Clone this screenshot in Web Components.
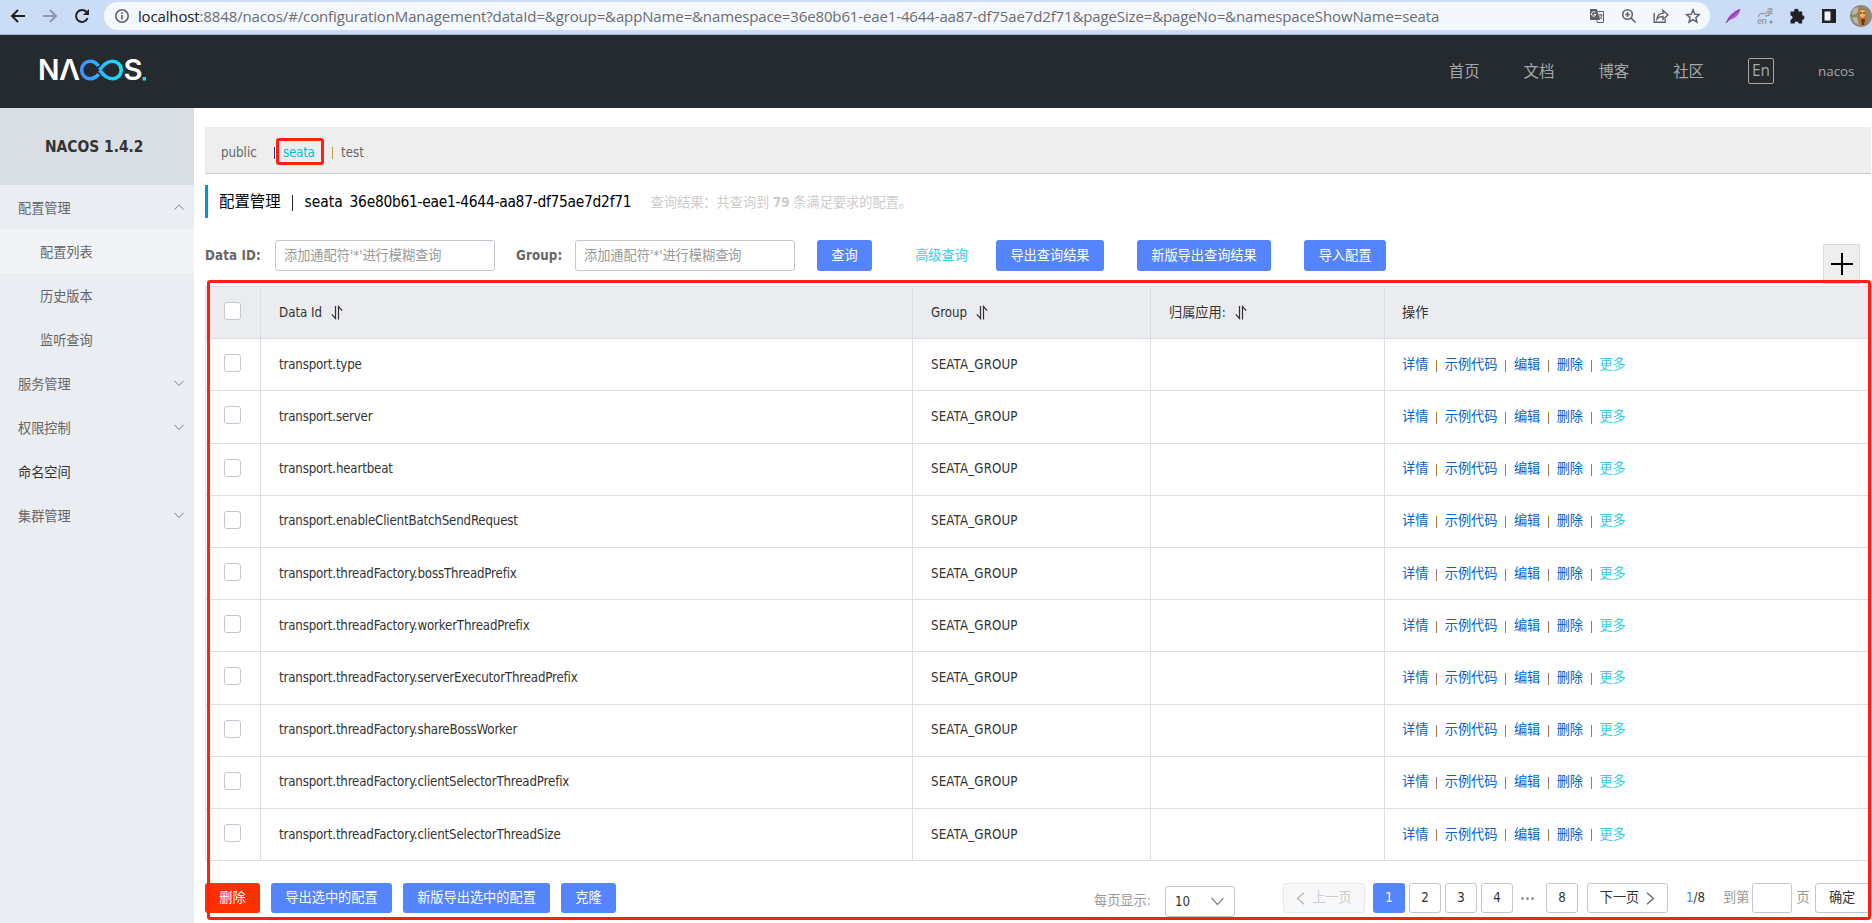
<!DOCTYPE html>
<html lang="zh-CN">
<head>
<meta charset="UTF-8">
<title>Nacos</title>
<style>
    html, body {
        margin: 0;
        height: 100%;
        overflow: hidden;
        background: #fff;
    }

    body {
        font: 13.2px/1.5 "DejaVu Sans Condensed", "Noto Sans CJK SC", sans-serif;
        color: #333;
    }
</style>
</head>
<body>
<nacos-app></nacos-app>

<script>
class BrowserBar extends HTMLElement {
    connectedCallback() {
        this.attachShadow({ mode: 'open' }).innerHTML = `
            <style>
                :host {
                    display: flex;
                    height: 35px;
                    box-sizing: border-box;
                    background: #cbdcf7;
                    border-bottom: 1px solid #a5b4d4;
                }

                svg { display: block; flex: none; }

                .nav {
                    display: flex;
                    gap: 16px;
                    width: 94px;
                    padding: 8px 0 0 10px;
                }

                .pill {
                    display: flex;
                    align-items: center;
                    width: 1608px;
                    height: 28px;
                    margin-top: 2px;
                    padding: 0 9px 0 10px;
                    box-sizing: border-box;
                    border-radius: 14px;
                    background: #f4f8fd;
                }

                .url {
                    flex: 1;
                    margin-left: 8px;
                    font: 15px/28px "Open Sans", sans-serif;
                    letter-spacing: -0.13px;
                    color: #6a6d72;
                    white-space: nowrap;
                }

                .url b { font-weight: 400; color: #202124; }

                .inner, .ext { display: flex; gap: 16px; }

                .ext { padding: 8px 0 0 15px; }

                .avatar { margin: -3px 0 0 -3px; }
            </style>
            <div class="nav">
                <svg width="16" height="16" fill="none" stroke="#202124" stroke-width="2"><path d="M15 8H2M8 2 2 8l6 6"/></svg>
                <svg width="16" height="16" fill="none" stroke="#8a97ad" stroke-width="2"><path d="M1 8h13M8 2l6 6-6 6"/></svg>
                <svg width="16" height="16" fill="none" stroke="#202124" stroke-width="2"><path d="M13.6 10.2A6 6 0 1 1 12.6 4"/><path d="M15 1v6H9z" fill="#202124" stroke="none"/></svg>
            </div>
            <div class="pill">
                <svg width="16" height="16" fill="none" stroke="#5f6368" stroke-width="1.6"><circle cx="8" cy="8" r="6.2"/><path d="M8 7v4.5M8 4.3V6"/></svg>
                <span class="url"><b>localhost</b>:8848/nacos/#/configurationManagement?dataId=&amp;group=&amp;appName=&amp;namespace=36e80b61-eae1-4644-aa87-df75ae7d2f71&amp;pageSize=&amp;pageNo=&amp;namespaceShowName=seata</span>
                <div class="inner">
                    <svg width="16" height="16"><path d="M1 1h7l3 11H2q-1 0-1-1z" fill="#5f6368"/><path d="M9 3.5h5.5v11H8.5L7.6 12" fill="none" stroke="#5f6368"/><path d="M6.3 4.500A2.200 2.200 0 1 0 6.800 6.500H4.700" fill="none" stroke="#f4f8fd"/><path d="M9.500 7h4M11.500 6v1M13 7q-.6 3-3 4M10.500 8.500q1 2 2.600 2.700" fill="none" stroke="#5f6368"/></svg>
                    <svg width="16" height="16" fill="none" stroke="#5f6368" stroke-width="1.6"><circle cx="6.500" cy="6.500" r="4.800"/><path d="m10 10 4.500 4.500M6.500 4.300v4.400M4.300 6.500h4.400"/></svg>
                    <svg width="16" height="16" fill="none" stroke="#5f6368" stroke-width="1.4"><path d="M1.200 5v9.300h11V11M4 11q.500-5.600 6-5.600V2.400L15 7l-5 4.300V8.500Q6 8.300 4 11z"/></svg>
                    <svg width="16" height="16" fill="none" stroke="#5f6368" stroke-width="1.500"><path d="m8 1.900 1.800 4.300 4.500.4-3.400 3 1 4.500L8 11.700l-3.900 2.400 1-4.500-3.400-3 4.500-.4z"/></svg>
                </div>
            </div>
            <div class="ext">
                <svg width="16" height="16"><path d="M1 15Q3 5 15.500.5 15 9 3.500 12.500z" fill="#b455d6"/><path d="M1 15Q6 8 14 2" fill="none" stroke="#6d2c91"/></svg>
                <svg width="16" height="20" fill="none" stroke="#9a9da3" stroke-width="1.300"><path d="M1.500 9q1-4 4.500-3.500T11 3M8 8l5-1M10.500 1h5M13 0v2M15 2q-1 3-4 4M11.500 3q1.500 2 4 3"/><circle cx="14" cy="14" r="1.500" fill="#8a8d93" stroke="none"/><text x="0" y="16" font-family="Roboto" font-size="9" fill="#85888e" stroke="none">en</text></svg>
                <svg width="16" height="16"><path d="M1.500 3.500h3.700a2.200 2.200 0 1 1 4.300 0H13.200v3.700a2.300 2.300 0 1 1 0 4.600V15.500H9.700a2 2 0 0 0-4.200 0h-4v-3.800a2 2 0 0 0 0-4.200z" fill="#202124"/></svg>
                <svg width="16" height="16"><path d="M1 1h14v14H1z" fill="#202124"/><path d="M3.500 3.500h6v9h-6z" fill="#edf3fc"/></svg>
                <svg class="avatar" width="22" height="22"><circle cx="11" cy="11" r="11" fill="#8d8a78"/><path d="M3 4l4-2 2 3-3 4-4 1zM2 13l5-1 2 8-4-2z" fill="#b9b5a5"/><path d="M8 5q4-4 8 0l2 6-2 9-6 1-2-8z" fill="#b7773a"/><path d="M10 6q3-2 5 0v5l-3 2-2-2z" fill="#e4b878"/><circle cx="11" cy="8" r=".8"/><circle cx="14" cy="8" r=".8"/><path d="M11 14h4l-1 6h-2z" fill="#6e321d"/></svg>
            </div>
        `;
    }
}

class NacosHeader extends HTMLElement {
    connectedCallback() {
        this.attachShadow({ mode: 'open' }).innerHTML = `
            <style>
                :host {
                    display: flex;
                    justify-content: space-between;
                    align-items: center;
                    height: 73px;
                    padding: 0 18px 0 30px;
                    box-sizing: border-box;
                    background: #252a2f;
                    color: #a5a8aa;
                }

                nav {
                    display: flex;
                    align-items: center;
                    gap: 44px;
                    font-size: 15.4px;
                }

                nav span { padding-top: 2px; }

                nav .lang {
                    width: 24px;
                    height: 24px;
                    margin-top: -1px;
                    padding: 0;
                    border: 1px solid #a5a8aa;
                    border-radius: 2px;
                    font: 15.4px/23px "Open Sans", sans-serif;
                    text-align: center;
                }

                nav .user {
                    width: 36px;
                    padding: 0;
                    font: 13.4px "Open Sans", sans-serif;
                    white-space: nowrap;
                }
            </style>
            <svg width="128" height="48" viewBox="30 47.500 128 48">
                <defs>
                    <linearGradient id="loop" x1="80" x2="123" y1="0" y2="0" gradientUnits="userSpaceOnUse">
                        <stop offset="0" stop-color="#448cff"/>
                        <stop offset="1" stop-color="#12e6f5"/>
                    </linearGradient>
                </defs>
                <g font-family="Inter" font-weight="600" font-size="28.500" fill="#fff">
                    <text x="38" y="79.800" textLength="21.500" lengthAdjust="spacingAndGlyphs">N</text>
                    <text x="59" y="79.800" textLength="21" lengthAdjust="spacingAndGlyphs">Λ</text>
                    <text x="123.500" y="79.800" textLength="19" lengthAdjust="spacingAndGlyphs">S</text>
                </g>
                <path d="M98.500 65.500C95.500 61.500 92 60.800 90.300 60.800a8.700 8.700 0 0 0 0 17.400c3.500 0 6-1.800 8.300-4.400M99.500 69.500C104 64 107 60.800 112.500 60.800a8.700 8.700 0 0 1 0 17.400C107 78.200 104 75 99.500 69.500" fill="none" stroke="url(#loop)" stroke-width="3.600"/>
                <path d="M142.500 76.500h3.500v3.500h-3.500z" fill="#12dff0"/>
            </svg>
            <nav>
                <span>首页</span>
                <span>文档</span>
                <span>博客</span>
                <span>社区</span>
                <span class="lang">En</span>
                <span class="user">nacos</span>
            </nav>
        `;
    }
}

class MenuItem extends HTMLElement {
    connectedCallback() {
        const arrow = this.getAttribute('arrow');
        const path = arrow === 'up' ? 'M.5 5.500 5 .8l4.500 4.700' : 'M.5.8 5 5.500 9.500.8';

        this.attachShadow({ mode: 'open' }).innerHTML = `
            <style>
                :host {
                    display: flex;
                    justify-content: space-between;
                    align-items: center;
                    height: 44px;
                    padding: 3px 10px 0 18px;
                    box-sizing: border-box;
                    color: #666;
                }

                svg { margin-top: -3px; }

                :host([sub]) { padding-left: 40px; }
                :host([active]) { background: #f2f3f7; }
                :host([leaf]) { color: #333; }
            </style>
            <slot></slot>
            ${arrow ? `<svg width="10" height="6" fill="none" stroke="#808489"><path d="${path}"/></svg>` : ''}
        `;
    }
}

class SideMenu extends HTMLElement {
    connectedCallback() {
        this.attachShadow({ mode: 'open' }).innerHTML = `
            <style>
                :host {
                    display: block;
                    flex: none;
                    width: 194px;
                    background: #eaedf2;
                }

                h1 {
                    margin: 0;
                    height: 77px;
                    padding-left: 45px;
                    background: #d9dde4;
                    font-size: 15.4px;
                    line-height: 79px;
                    white-space: nowrap;
                }
            </style>
            <h1>NACOS 1.4.2</h1>
            <menu-item arrow="up">配置管理</menu-item>
            <menu-item sub active>配置列表</menu-item>
            <menu-item sub>历史版本</menu-item>
            <menu-item sub>监听查询</menu-item>
            <menu-item arrow="down">服务管理</menu-item>
            <menu-item arrow="down">权限控制</menu-item>
            <menu-item leaf>命名空间</menu-item>
            <menu-item arrow="down">集群管理</menu-item>
        `;
    }
}

class NcButton extends HTMLElement {
    connectedCallback() {
        this.attachShadow({ mode: 'open' }).innerHTML = `
            <style>
                :host {
                    display: inline-flex;
                    flex: none;
                    justify-content: center;
                    align-items: center;
                    height: 31px;
                    box-sizing: border-box;
                    border-radius: 3px;
                    background: #5584ff;
                    color: #fff;
                    white-space: nowrap;
                }

                :host([type="warning"]) { background: #ff3000; }
                :host([type="text"]) { background: none; color: #33cde5; }
                :host([type="normal"]) {
                    background: #fff;
                    border: 1px solid #c4c6cf;
                    color: #333;
                }
                :host([type="disabled"]) {
                    background: #f7f8fa;
                    border: 1px solid #e6e7eb;
                    color: #ccc;
                }
            </style>
            <slot></slot>
        `;
    }
}

class NamespaceTabs extends HTMLElement {
    connectedCallback() {
        this.attachShadow({ mode: 'open' }).innerHTML = `
            <style>
                :host {
                    display: flex;
                    align-items: center;
                    height: 47px;
                    padding: 5px 0 0 16px;
                    box-sizing: border-box;
                    background: #eee;
                    border-bottom: 1px solid #c9cacc;
                    color: #666;
                }

                span { position: relative; }
                .public { width: 53px; }
                .current {
                    width: 49px;
                    padding-left: 8px;
                    box-sizing: content-box;
                    color: #00c1de;
                    letter-spacing: -0.2px;
                }
                .bar { width: 1px; height: 12px; background: #3b3f66; }
                .bar.warm { background: #c29a4e; }
                .last { padding-left: 8px; }

                .mark {
                    position: absolute;
                    left: 1px;
                    top: -5px;
                    width: 42px;
                    height: 21px;
                    border: 3px solid #ff1f14;
                    border-radius: 3px;
                }
            </style>
            <span class="public">public</span>
            <i class="bar"></i>
            <span class="current">seata<i class="mark"></i></span>
            <i class="bar warm"></i>
            <span class="last">test</span>
        `;
    }
}

class SearchForm extends HTMLElement {
    connectedCallback() {
        this.attachShadow({ mode: 'open' }).innerHTML = `
            <style>
                :host {
                    display: flex;
                    align-items: center;
                    height: 31px;
                    margin-top: 22px;
                }

                label {
                    width: 70px;
                    font-weight: 700;
                    color: #666;
                    letter-spacing: 0.15px;
                    white-space: nowrap;
                }
                label.group { width: 59px; margin-left: 21px; }

                input {
                    width: 220px;
                    height: 31px;
                    padding: 0 8px;
                    box-sizing: border-box;
                    border: 1px solid #c4c6cf;
                    border-radius: 3px;
                    font: inherit;
                }

                input::placeholder { color: #999; }

                .query { width: 55px; margin-left: 22px; }
                .more { width: 81px; margin: 0 14px 0 29px; }
                .export { width: 108px; }
                .export-new { width: 134px; margin-left: 33px; }
                .import { width: 82px; margin-left: 33px; }

                .add {
                    display: flex;
                    justify-content: center;
                    align-items: center;
                    align-self: flex-start;
                    width: 37px;
                    height: 40px;
                    margin: 4px 11px 0 auto;
                    box-sizing: border-box;
                    border: 1px solid #ddd;
                    background: #eee;
                }
            </style>
            <label>Data ID:</label>
            <input placeholder="添加通配符'*'进行模糊查询">
            <label class="group">Group:</label>
            <input placeholder="添加通配符'*'进行模糊查询">
            <nc-button class="query">查询</nc-button>
            <nc-button class="more" type="text">高级查询</nc-button>
            <nc-button class="export">导出查询结果</nc-button>
            <nc-button class="export-new">新版导出查询结果</nc-button>
            <nc-button class="import">导入配置</nc-button>
            <div class="add"><svg width="22" height="22" stroke="#000" stroke-width="2"><path d="M0 11h22M11 0v22"/></svg></div>
        `;
    }
}

class ConfigTable extends HTMLElement {
    connectedCallback() {
        const ids = [
            'transport.type',
            'transport.server',
            'transport.heartbeat',
            'transport.enableClientBatchSendRequest',
            'transport.threadFactory.bossThreadPrefix',
            'transport.threadFactory.workerThreadPrefix',
            'transport.threadFactory.serverExecutorThreadPrefix',
            'transport.threadFactory.shareBossWorker',
            'transport.threadFactory.clientSelectorThreadPrefix',
            'transport.threadFactory.clientSelectorThreadSize'
        ];
        const sort = '<svg width="12" height="15" fill="none" stroke="#333" stroke-width="1.200"><path d="M4.500 1v12.500L.8 9.300M7.500 14.500V1.500l3.700 4.200"/></svg>';
        const check = '<div class="check"><i></i></div>';

        this.attachShadow({ mode: 'open' }).innerHTML = `
            <style>
                :host {
                    display: block;
                    margin-top: 15px;
                    border: 1px solid #dcdee3;
                    border-width: 1px 0 0 1px;
                }

                .row {
                    display: grid;
                    grid-template-columns: 55px 652px 238px 234px 1fr;
                    height: 52.2px;
                }

                .row > div {
                    display: flex;
                    align-items: center;
                    padding-left: 18px;
                    border-right: 1px solid #dcdee3;
                    border-bottom: 1px solid #dcdee3;
                    white-space: nowrap;
                }

                .head > div { background: #ebecf0; }
                .head svg { margin-left: 9px; }

                .check i {
                    width: 15px;
                    height: 16px;
                    margin-top: -3px;
                    border: 1px solid #c4c6cf;
                    border-radius: 3px;
                    background: #fff;
                }

                .id { letter-spacing: -0.17px; }
                .group { letter-spacing: 0.15px; }

                .row > .ops { padding-left: 17px; }
                .ops a { color: #06c; }
                .ops a:last-child { color: #33cde5; }
                .ops i { width: 1px; height: 12px; margin: 2px 7.700px 0 7.700px; background: #997d60; }
            </style>
            <div class="row head">
                ${check}
                <div>Data Id ${sort}</div>
                <div>Group ${sort}</div>
                <div>归属应用: ${sort}</div>
                <div class="ops">操作</div>
            </div>
            ${ids.map((id) => `
                <div class="row">
                    ${check}
                    <div class="id">${id}</div>
                    <div class="group">SEATA_GROUP</div>
                    <div></div>
                    <div class="ops"><a>详情</a><i></i><a>示例代码</a><i></i><a>编辑</a><i></i><a>删除</a><i></i><a>更多</a></div>
                </div>
            `).join('')}
        `;
    }
}

class TableFooter extends HTMLElement {
    connectedCallback() {
        this.attachShadow({ mode: 'open' }).innerHTML = `
            <style>
                :host {
                    display: flex;
                    align-items: center;
                    height: 30px;
                    margin-top: 22px;
                    white-space: nowrap;
                }

                svg { flex: none; }
                nc-button { height: 30px; margin-right: 11px; }
                .size-label { width: 71px; margin: 6px 0 0 467px; color: #999; }

                .size {
                    display: flex;
                    flex: none;
                    justify-content: space-between;
                    align-items: center;
                    width: 70px;
                    height: 31px;
                    margin: 7px 48px 0 0;
                    padding: 0 10px 0 9px;
                    box-sizing: border-box;
                    border: 1px solid #c4c6cf;
                    border-radius: 3px;
                }

                .page { width: 32px; margin-right: 4px; }
                .prev { width: 82px; margin-right: 8px; }
                .prev svg { margin-right: 7px; }
                .next { width: 81px; margin: 0 18px 0 5px; }
                .next svg { margin-left: 7px; }
                .dots { display: flex; gap: 2px; width: 25px; margin-left: 4px; }
                .dots i { width: 3px; height: 3px; border-radius: 50%; background: #999; }
                .total { width: 37px; }
                .total em { font-style: normal; color: #5584ff; }
                .muted { color: #999; }

                .jump {
                    flex: none;
                    width: 40px;
                    height: 30px;
                    margin: 0 4px 0 3px;
                    box-sizing: border-box;
                    border: 1px solid #c4c6cf;
                    border-radius: 3px;
                }

                .ok { width: 55px; margin: 0 0 0 5px; }
            </style>
            <nc-button type="warning" style="width:55px">删除</nc-button>
            <nc-button style="width:121px">导出选中的配置</nc-button>
            <nc-button style="width:147px">新版导出选中的配置</nc-button>
            <nc-button style="width:55px">克隆</nc-button>
            <span class="size-label">每页显示:</span>
            <div class="size">10 <svg width="13" height="9" fill="none" stroke="#888" stroke-width="1.300"><path d="m.6 1 5.900 6.500L12.400 1"/></svg></div>
            <nc-button class="prev" type="disabled"><svg width="9" height="13" fill="none" stroke="#bbb" stroke-width="1.500"><path d="M8 .8 1.500 6.500 8 12.200"/></svg>上一页</nc-button>
            <nc-button class="page">1</nc-button>
            <nc-button class="page" type="normal">2</nc-button>
            <nc-button class="page" type="normal">3</nc-button>
            <nc-button class="page" type="normal">4</nc-button>
            <span class="dots"><i></i><i></i><i></i></span>
            <nc-button class="page" type="normal">8</nc-button>
            <nc-button class="next" type="normal">下一页<svg width="9" height="13" fill="none" stroke="#666" stroke-width="1.300"><path d="M1 .8 7.500 6.500 1 12.200"/></svg></nc-button>
            <span class="total"><em>1</em>/8</span>
            <span class="muted">到第</span>
            <div class="jump"></div>
            <span class="muted">页</span>
            <nc-button class="ok" type="normal">确定</nc-button>
        `;
    }
}

class NacosApp extends HTMLElement {
    connectedCallback() {
        this.attachShadow({ mode: 'open' }).innerHTML = `
            <style>
                :host {
                    display: flex;
                    flex-direction: column;
                    position: relative;
                    width: 1872px;
                    height: 923px;
                    overflow: hidden;
                }

                .body { display: flex; flex: 1; }

                main {
                    width: 1666px;
                    margin-left: 11px;
                    padding-top: 19px;
                }

                .title {
                    display: flex;
                    align-items: center;
                    height: 33px;
                    margin-top: 11px;
                    padding: 2px 0 0 11px;
                    box-sizing: border-box;
                    border-left: 3px solid #09c;
                    color: #000;
                    font-size: 15.4px;
                    white-space: pre;
                }

                .title i { width: 1px; height: 16px; margin: 0 12px 0 11px; background: #222; }
                .ns { width: 45px; }
                .uuid { width: 301px; letter-spacing: -0.27px; }
                .result { font-size: 13.2px; color: #ccc; }

                .frame {
                    position: absolute;
                    left: 207px;
                    top: 280px;
                    width: 1664px;
                    height: 640px;
                    box-sizing: border-box;
                    border: 3px solid #ff1f14;
                    border-radius: 3px;
                }
            </style>
            <browser-bar></browser-bar>
            <nacos-header></nacos-header>
            <div class="body">
                <side-menu></side-menu>
                <main>
                    <namespace-tabs></namespace-tabs>
                    <div class="title">配置管理<i></i><span class="ns">seata</span><span class="uuid">36e80b61-eae1-4644-aa87-df75ae7d2f71</span><span class="result">查询结果：共查询到 <b>79</b> 条满足要求的配置。</span></div>
                    <search-form></search-form>
                    <config-table></config-table>
                    <table-footer></table-footer>
                </main>
            </div>
            <div class="frame"></div>
        `;
    }
}

customElements.define('browser-bar', BrowserBar);
customElements.define('nacos-header', NacosHeader);
customElements.define('menu-item', MenuItem);
customElements.define('side-menu', SideMenu);
customElements.define('nc-button', NcButton);
customElements.define('namespace-tabs', NamespaceTabs);
customElements.define('search-form', SearchForm);
customElements.define('config-table', ConfigTable);
customElements.define('table-footer', TableFooter);
customElements.define('nacos-app', NacosApp);
</script>
</body>
</html>
